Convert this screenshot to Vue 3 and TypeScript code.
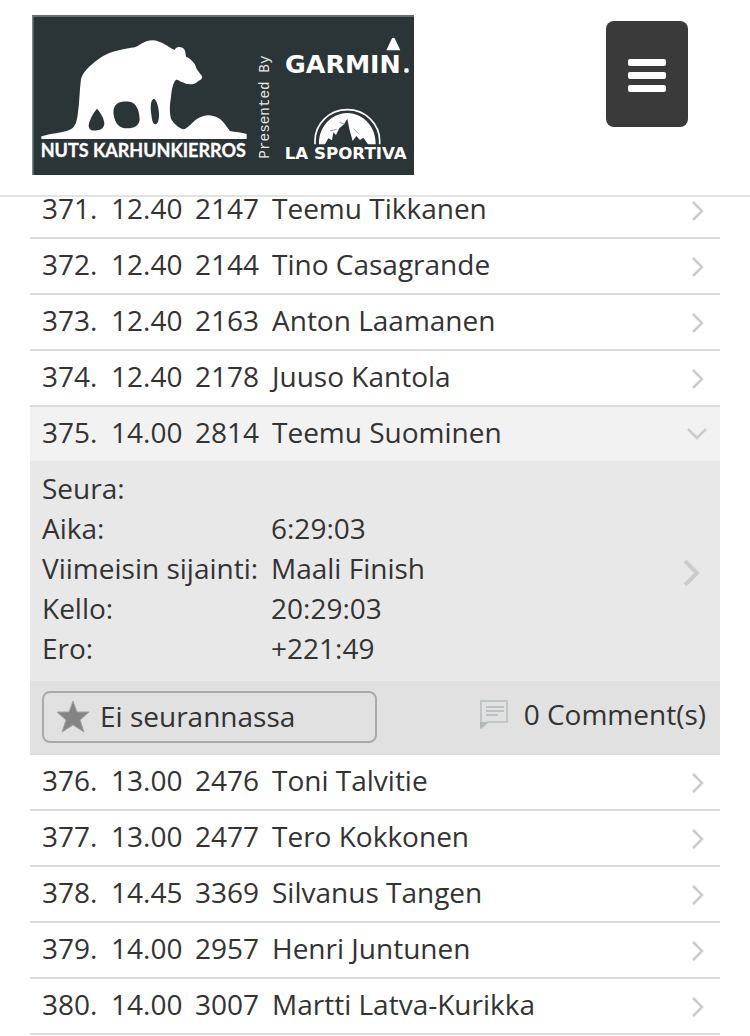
<script setup lang="ts">
import { ref } from 'vue'

interface Runner {
  rank: number
  start: string
  bib: number
  name: string
}

const runners: Runner[] = [
  { rank: 371, start: '12.40', bib: 2147, name: 'Teemu Tikkanen' },
  { rank: 372, start: '12.40', bib: 2144, name: 'Tino Casagrande' },
  { rank: 373, start: '12.40', bib: 2163, name: 'Anton Laamanen' },
  { rank: 374, start: '12.40', bib: 2178, name: 'Juuso Kantola' },
  { rank: 375, start: '14.00', bib: 2814, name: 'Teemu Suominen' },
  { rank: 376, start: '13.00', bib: 2476, name: 'Toni Talvitie' },
  { rank: 377, start: '13.00', bib: 2477, name: 'Tero Kokkonen' },
  { rank: 378, start: '14.45', bib: 3369, name: 'Silvanus Tangen' },
  { rank: 379, start: '14.00', bib: 2957, name: 'Henri Juntunen' },
  { rank: 380, start: '14.00', bib: 3007, name: 'Martti Latva-Kurikka' },
]

const facts = [
  { label: 'Seura:', value: '' },
  { label: 'Aika:', value: '6:29:03' },
  { label: 'Viimeisin sijainti:', value: 'Maali Finish' },
  { label: 'Kello:', value: '20:29:03' },
  { label: 'Ero:', value: '+221:49' },
]

const openRank = ref(375)

function toggle(rank: number) {
  openRank.value = openRank.value === rank ? 0 : rank
}
</script>

<template>
  <div class="page">
    <header class="header">
      <a href="#" class="logo" aria-label="NUTS Karhunkierros">
        <svg viewBox="36 30 1146 480" width="382" height="160">
          <rect x="36" y="30" width="1146" height="480" fill="#2b3436" />
          <path d="M38 510V33H1182" fill="none" stroke="#7d8485" stroke-width="5" />
          <g fill="#fff">
            <path
              fill-rule="evenodd"
              d="M64 394C90 386 128 383 148 375C164 368 169 356 173 330C179 292 178 258 183 222C190 196 222 172 248 154C280 136 314 132 345 127C364 119 374 106 397 106C424 107 440 124 464 135C468 124 480 124 490 130C497 137 496 145 498 155C516 163 526 176 530 192C536 202 545 209 547 217C545 225 538 226 532 230C524 240 500 240 488 232C479 229 475 223 468 224C459 232 455 254 453 276C448 305 449 324 453 341C461 355 475 369 491 373C512 369 522 333 566 331C605 333 616 361 630 378C645 382 665 382 680 387V402H64ZM231 311C222 322 208 343 206 362C207 374 215 379 232 376C244 374 253 368 253 353C250 335 240 321 231 311ZM300 292C283 298 279 312 281 329C285 355 297 370 322 370C343 370 357 361 359 344C358 321 352 300 337 293C327 289 310 289 300 292ZM401 281C391 286 391 310 394 328C396 346 398 358 407 358C416 355 417 340 417 325C415 305 411 286 401 281Z"
            />
            <text x="62" y="457" class="logo-nuts">NUTS KARHUNKIERROS</text>
            <text transform="translate(746 461) rotate(-90)" class="logo-presented">Presented By</text>
            <text x="795" y="203" class="logo-garmin">GARMIN</text>
            <rect x="1153" y="190" width="13" height="13" rx="4" />
            <path d="M1116 100Q1120 97 1124 100L1141 136H1099Z" />
            <path
              d="M885 418V408A97 94 0 0 1 1079 408V418"
              fill="none"
              stroke="#fff"
              stroke-width="5"
            />
            <path d="M897 418C896 368 930 326 982 324C1034 326 1068 368 1067 418H1044L1030 398L1020 405L1009 393L998 408L988 372L982 341L972 358L958 370L948 390L940 382L936 406L925 400L915 418Z" />
            <path d="M973 357L958 352M950 373L930 378M1000 371L1018 387" stroke="#99a0a1" stroke-width="3" />
            <text x="794" y="462" class="logo-sportiva">LA SPORTIVA</text>
          </g>
        </svg>
      </a>
      <button type="button" class="menu" aria-label="Menu">
        <span class="bar"></span>
        <span class="bar"></span>
        <span class="bar"></span>
      </button>
    </header>

    <ul class="results">
      <li v-for="r in runners" :key="r.rank">
        <button
          type="button"
          class="row"
          :class="{ open: r.rank === openRank }"
          :aria-expanded="r.rank === openRank"
          @click="toggle(r.rank)"
        >
          <span class="rank">{{ r.rank }}.</span>
          <span class="start">{{ r.start }}</span>
          <span class="bib">{{ r.bib }}</span>
          <span class="name">{{ r.name }}</span>
          <svg v-if="r.rank === openRank" class="chevron" viewBox="0 0 20 12" width="20" height="12">
            <path d="M1 1L10 10L19 1" />
          </svg>
          <svg v-else class="chevron" viewBox="0 0 12 20" width="12" height="20">
            <path d="M1 2L10 11L1 20" />
          </svg>
        </button>

        <template v-if="r.rank === openRank">
          <a href="#" class="details">
            <dl class="facts">
              <div v-for="f in facts" :key="f.label" class="fact">
                <dt>{{ f.label }}</dt>
                <dd>{{ f.value }}</dd>
              </div>
            </dl>
            <svg class="more" viewBox="0 0 18 28" width="18" height="28">
              <path d="M2 2L14 14L2 26" />
            </svg>
          </a>
          <div class="actions">
            <button type="button" class="follow">
              <svg viewBox="0 0 36 34" width="36" height="34">
                <path
                  d="M18 2L22 13L34 13L25 21L29 33L18 26L7 33L11 21L2 13L14 13Z"
                  fill="#848484"
                  stroke="#a2a2a2"
                  stroke-width="1"
                />
              </svg>
              Ei seurannassa
            </button>
            <a href="#" class="comments">
              <svg viewBox="0 0 30 30" width="30" height="30" fill="none">
                <path d="M2 24V2H28V23H9L2 29Z" stroke="#c0c5c6" stroke-width="2" />
                <path d="M1 23H9L2 29H1Z" fill="#b4b7b8" />
                <path d="M7 8H25M7 12H25M7 16H19" stroke="#bcc2c3" stroke-width="2" />
              </svg>
              0 Comment(s)
            </a>
          </div>
        </template>
      </li>
    </ul>
  </div>
</template>

<style>
body {
  margin: 0;
  background: #fff;
}
</style>

<style scoped>
.page {
  font-family: 'Open Sans', 'Noto Sans', sans-serif;
  font-size: 28px;
  color: #333;
}

button {
  font: inherit;
  color: inherit;
  cursor: pointer;
}

a {
  color: inherit;
  text-decoration: none;
}

.header {
  position: sticky;
  top: 0;
  z-index: 1;
  display: flex;
  justify-content: space-between;
  align-items: flex-start;
  padding: 15px 62px 20px 32px;
  background: #fff;
  border-bottom: 2px solid #e4e4e4;
}

.logo svg {
  display: block;
}

.logo-nuts {
  font: 700 54px Lato, sans-serif;
  stroke: #fff;
  stroke-width: 1px;
}

.logo-presented {
  font: 400 43px 'Liberation Mono', monospace;
  fill: #e6e8e8;
}

.logo-garmin {
  font: 700 76px 'DejaVu Sans', sans-serif;
}

.logo-sportiva {
  font: 700 50px 'DejaVu Sans', sans-serif;
}

.menu {
  display: flex;
  flex-direction: column;
  justify-content: center;
  align-items: center;
  gap: 6px;
  width: 82px;
  height: 106px;
  margin: 6px 0 0;
  padding: 2px 0 0;
  border: 0;
  border-radius: 8px;
  background: #3a3a3a;
}

.bar {
  width: 38px;
  height: 7px;
  border-radius: 2px;
  background: #fff;
}

.results {
  margin: -14px 30px 0;
  padding: 0;
  list-style: none;
}

.row {
  display: grid;
  grid-template-columns: 69px 84px 77px 1fr auto;
  align-items: center;
  width: 100%;
  padding: 0 16px 4px 12px;
  border: 0;
  border-bottom: 2px solid #dcdcdc;
  background: #fff;
  line-height: 50px;
  text-align: left;
}

.row.open {
  padding-right: 13px;
  border-bottom: 0;
  background: #f2f2f2;
}

.chevron,
.more {
  overflow: visible;
  fill: none;
  stroke: #ccc;
  stroke-width: 2.5;
}

.chevron {
  margin-top: 4px;
}

.more {
  margin-top: 10px;
  stroke-width: 4;
}

.details {
  display: flex;
  justify-content: space-between;
  align-items: center;
  padding: 7px 19px 13px 12px;
  background: #e8e8e8;
  line-height: 40px;
}

.facts {
  margin: 0;
}

.fact {
  display: grid;
  grid-template-columns: 229px 1fr;
  min-height: 40px;
}

.fact dd {
  margin: 0;
}

.actions {
  display: flex;
  justify-content: space-between;
  align-items: flex-start;
  padding: 10px 14px 10px 12px;
  border-bottom: 2px solid #dcdcdc;
  background: #e1e1e1;
}

.follow {
  display: flex;
  align-items: center;
  gap: 9px;
  width: 335px;
  padding: 0 11px 2px;
  border: 2px solid #aaa;
  border-radius: 8px;
  background: transparent;
  line-height: 46px;
}

.comments {
  display: flex;
  align-items: center;
  gap: 15px;
  line-height: 46px;
}
</style>
